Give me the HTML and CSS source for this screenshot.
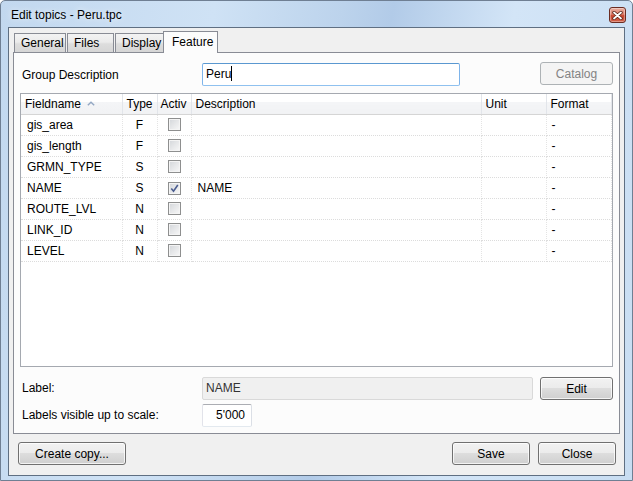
FILE: index.html
```html
<!DOCTYPE html>
<html lang="en">

<head>
    <meta charset="UTF-8">
    <title>Edit topics - Peru.tpc</title>
    <link rel="stylesheet" href="styles.css">
</head>

<body>

    <div class="window">

        <div class="titlebar">
            <span class="titlebar__text">Edit topics - Peru.tpc</span>
            <span class="titlebar__close">
                <svg width="11" height="9" viewBox="0 0 11 9">
                    <path d="M2 1.5 L9 7.5 M9 1.5 L2 7.5" stroke="#5a2418" stroke-width="3.4" stroke-linecap="round" fill="none" />
                    <path d="M2 1.5 L9 7.5 M9 1.5 L2 7.5" stroke="#ffffff" stroke-width="1.8" stroke-linecap="round" fill="none" />
                </svg>
            </span>
        </div>
        <!--/titlebar-->

        <div class="client">

            <div class="tabs">
                <div class="tab tab--general">General</div>
                <div class="tab tab--files">Files</div>
                <div class="tab tab--display">Display</div>
                <div class="tab tab--feature tab--active">Feature</div>
            </div>

            <div class="tab-page">

                <div class="group-row">
                    <span class="field-label field-label--group">Group Description</span>
                    <div class="textbox textbox--focus textbox--group">Peru<span class="caret"></span></div>
                    <button class="btn btn--side btn--disabled">Catalog</button>
                </div>

                <div class="grid">
                    <table class="grid__table">
                        <colgroup>
                            <col class="col-name">
                            <col class="col-type">
                            <col class="col-activ">
                            <col class="col-desc">
                            <col class="col-unit">
                            <col class="col-format">
                        </colgroup>
                        <thead>
                            <tr>
                                <th>Fieldname
                                    <svg class="sort-arrow" width="8" height="5" viewBox="0 0 8 5">
                                        <path d="M0.8 4.3 L4 1.2 L7.2 4.3" stroke="#94a8c4" stroke-width="1.4" fill="none" />
                                    </svg>
                                </th>
                                <th>Type</th>
                                <th class="th-activ">Activ</th>
                                <th>Description</th>
                                <th>Unit</th>
                                <th>Format</th>
                            </tr>
                        </thead>
                        <tbody>
                            <tr>
                                <td>gis_area</td>
                                <td class="td-center">F</td>
                                <td class="td-center"><span class="checkbox"></span></td>
                                <td></td>
                                <td></td>
                                <td>-</td>
                            </tr>
                            <tr>
                                <td>gis_length</td>
                                <td class="td-center">F</td>
                                <td class="td-center"><span class="checkbox"></span></td>
                                <td></td>
                                <td></td>
                                <td>-</td>
                            </tr>
                            <tr>
                                <td>GRMN_TYPE</td>
                                <td class="td-center">S</td>
                                <td class="td-center"><span class="checkbox"></span></td>
                                <td></td>
                                <td></td>
                                <td>-</td>
                            </tr>
                            <tr>
                                <td>NAME</td>
                                <td class="td-center">S</td>
                                <td class="td-center">
                                    <span class="checkbox checkbox--checked">
                                        <svg width="9" height="9" viewBox="0 0 9 9">
                                            <path d="M1.3 4.6 L3.5 7.2 L7.8 1" stroke="#4a5c8f" stroke-width="1.6" fill="none" />
                                        </svg>
                                    </span>
                                </td>
                                <td>NAME</td>
                                <td></td>
                                <td>-</td>
                            </tr>
                            <tr>
                                <td>ROUTE_LVL</td>
                                <td class="td-center">N</td>
                                <td class="td-center"><span class="checkbox"></span></td>
                                <td></td>
                                <td></td>
                                <td>-</td>
                            </tr>
                            <tr>
                                <td>LINK_ID</td>
                                <td class="td-center">N</td>
                                <td class="td-center"><span class="checkbox"></span></td>
                                <td></td>
                                <td></td>
                                <td>-</td>
                            </tr>
                            <tr>
                                <td>LEVEL</td>
                                <td class="td-center">N</td>
                                <td class="td-center"><span class="checkbox"></span></td>
                                <td></td>
                                <td></td>
                                <td>-</td>
                            </tr>
                        </tbody>
                    </table>
                </div>
                <!--/grid-->

                <div class="prop-row prop-row--label">
                    <span class="field-label">Label:</span>
                    <div class="textbox textbox--disabled textbox--label">NAME</div>
                    <button class="btn btn--side">Edit</button>
                </div>

                <div class="prop-row prop-row--scale">
                    <span class="field-label">Labels visible up to scale:</span>
                    <div class="textbox textbox--scale">5'000</div>
                </div>

            </div>
            <!--/tab-page-->

            <div class="footer">
                <button class="btn btn--copy">Create copy...</button>
                <button class="btn btn--footer">Save</button>
                <button class="btn btn--footer">Close</button>
            </div>

        </div>
        <!--/client-->

    </div>

</body>

</html>
```
FILE: styles.css
```css
body {
    margin: 0;
    background: #ffffff;
    font-family: "Liberation Sans", Arial, sans-serif;
    font-size: 12px;
    color: #000;
}

.window {
    width: 633px;
    height: 481px;
    box-sizing: border-box;
    display: flex;
    flex-direction: column;
    border: 1px solid #6f7f93;
    border-radius: 5px 5px 0 0;
    padding: 0 7px 4px 7px;
    background: linear-gradient(100deg, #c2d8ef 0%, #cfe2f5 30%, #bcd3ec 48%, #b2cbe8 55%, #d3e5f7 72%, #c8ddf2 100%);
}

/* title bar */

.titlebar {
    height: 26px;
    display: flex;
    align-items: flex-start;
    margin: 0 -7px;
    padding: 0 6px 0 10px;
}

.titlebar__text {
    padding-top: 7px;
    line-height: 14px;
    color: #000;
    text-shadow: 0 0 6px rgba(255, 255, 255, .9);
}

.titlebar__close {
    margin-left: auto;
    margin-top: 6px;
    width: 17px;
    height: 16px;
    box-sizing: border-box;
    border: 1px solid #6b2c22;
    border-radius: 3px;
    background: linear-gradient(#eab1a3 0%, #dc7d6a 45%, #c8452e 55%, #d2624a 100%);
    box-shadow: inset 0 0 0 1px rgba(255, 255, 255, .35);
    display: flex;
    align-items: center;
    justify-content: center;
}

/* client area */

.client {
    flex: 1;
    display: flex;
    flex-direction: column;
    border: 1px solid #5f6f82;
    background: #f0f0f0;
    padding: 3px 4px 0 4px;
}

.tabs {
    display: flex;
    align-items: flex-end;
    height: 22px;
    margin-bottom: -1px;
    padding-left: 1px;
    position: relative;
    z-index: 1;
}

.tab {
    height: 19px;
    box-sizing: border-box;
    border: 1px solid #898c95;
    border-bottom: 0;
    margin-bottom: 1px;
    margin-right: 1px;
    padding: 2px 0 0 6px;
    line-height: 15px;
    background: linear-gradient(#f3f3f3 0%, #ebebeb 45%, #dddddd 55%, #d6d6d6 100%);
}

.tab--general {
    width: 52px;
}

.tab--files {
    width: 47px;
}

.tab--display {
    width: 49px;
    margin-right: -1px;
}

.tab--feature {
    width: 55px;
}

.tab--active {
    height: 22px;
    margin-bottom: 0;
    padding: 3px 0 0 8px;
    background: #fcfcfc;
    position: relative;
}

.tab-page {
    height: 382px;
    box-sizing: border-box;
    border: 1px solid #898c95;
    background: #fcfcfc;
    padding: 0 6px;
    display: flex;
    flex-direction: column;
}

.field-label {
    flex: 0 0 180px;
    padding-left: 2px;
    line-height: 23px;
}

.field-label--group {
    padding-top: 2px;
}

.group-row {
    display: flex;
    align-items: flex-start;
    margin-top: 9px;
    height: 24px;
}

.prop-row {
    display: flex;
    align-items: flex-start;
    height: 23px;
}

.prop-row--label {
    margin-top: 10px;
}

.prop-row--scale {
    margin-top: 4px;
}

/* text boxes */

.textbox {
    height: 23px;
    box-sizing: border-box;
    border: 1px solid #abadb3;
    border-color: #abadb3 #dbdfe6 #e3e9ef #e2e3ea;
    background: #fff;
    padding: 0 3px;
    line-height: 21px;
    border-radius: 2px;
}

.textbox--group {
    width: 258px;
    margin-top: 1px;
}

.textbox--focus {
    border-color: #5a98d0 #7eb4ea #8fc1ef #7eb4ea;
}

.caret {
    display: inline-block;
    width: 1px;
    height: 15px;
    background: #000;
    vertical-align: -3px;
}

.textbox--label {
    width: 331px;
}

.textbox--disabled {
    background: #f0f0f0;
    border-color: #d9d9d9;
    color: #333;
}

.textbox--scale {
    width: 50px;
    text-align: right;
    padding-right: 6px;
}

/* buttons */

.btn {
    height: 23px;
    box-sizing: border-box;
    border: 1px solid #707070;
    border-radius: 3px;
    background: linear-gradient(#f2f2f2 0%, #ebebeb 50%, #dddddd 50%, #cfcfcf 100%);
    box-shadow: inset 0 0 0 1px rgba(255, 255, 255, .75);
    font-family: inherit;
    font-size: 12px;
    color: #000;
    padding: 0;
    line-height: 20px;
}

.btn--side {
    width: 73px;
    margin-left: auto;
}

.btn--disabled {
    border-color: #adb2b5;
    background: #f4f4f4;
    box-shadow: none;
    color: #838383;
    margin-top: 0;
}

.footer {
    display: flex;
    margin-top: 8px;
    padding: 0 4px 0 5px;
}

.btn--copy {
    width: 108px;
}

.btn--footer {
    width: 78px;
    margin-left: 8px;
}

.btn--copy + .btn--footer {
    margin-left: auto;
}

/* fields grid */

.grid {
    margin-top: 7px;
    height: 274px;
    box-sizing: border-box;
    border: 1px solid #a5a9b0;
    background: #fff;
}

.grid__table {
    table-layout: fixed;
    border-collapse: collapse;
    width: 590px;
}

.col-name {
    width: 101px;
}

.col-type {
    width: 35px;
}

.col-activ {
    width: 34px;
}

.col-desc {
    width: 290px;
}

.col-unit {
    width: 65px;
}

.col-format {
    width: 65px;
}

.grid__table th {
    height: 20px;
    box-sizing: border-box;
    padding: 0 0 0 4px;
    text-align: left;
    font-weight: normal;
    white-space: nowrap;
    overflow: hidden;
    background: linear-gradient(#ffffff 0%, #ffffff 40%, #f4f5f7 40%, #f1f2f4 100%);
    border-right: 1px solid #e2e5ea;
    border-bottom: 1px solid #d5d5d5;
}

.grid__table .th-activ {
    padding-left: 3px;
}

.sort-arrow {
    margin-left: 3px;
    vertical-align: 2px;
}

.grid__table td {
    height: 21px;
    box-sizing: border-box;
    padding: 0 0 0 6px;
    border-bottom: 1px dotted #dcdcdc;
    border-right: 1px dotted #e4e4e4;
    white-space: nowrap;
}

.grid__table td:last-child {
    padding-left: 5px;
}

.grid__table .td-center {
    text-align: center;
    padding: 0;
}

.checkbox {
    display: inline-flex;
    align-items: center;
    justify-content: center;
    width: 13px;
    height: 13px;
    box-sizing: border-box;
    border: 1px solid #8e8f8f;
    background: linear-gradient(135deg, #d3d6da 0%, #e6e7e9 50%, #f8f8f8 100%);
    box-shadow: inset 0 0 0 1px #f4f4f4;
    vertical-align: -2px;
}
```
